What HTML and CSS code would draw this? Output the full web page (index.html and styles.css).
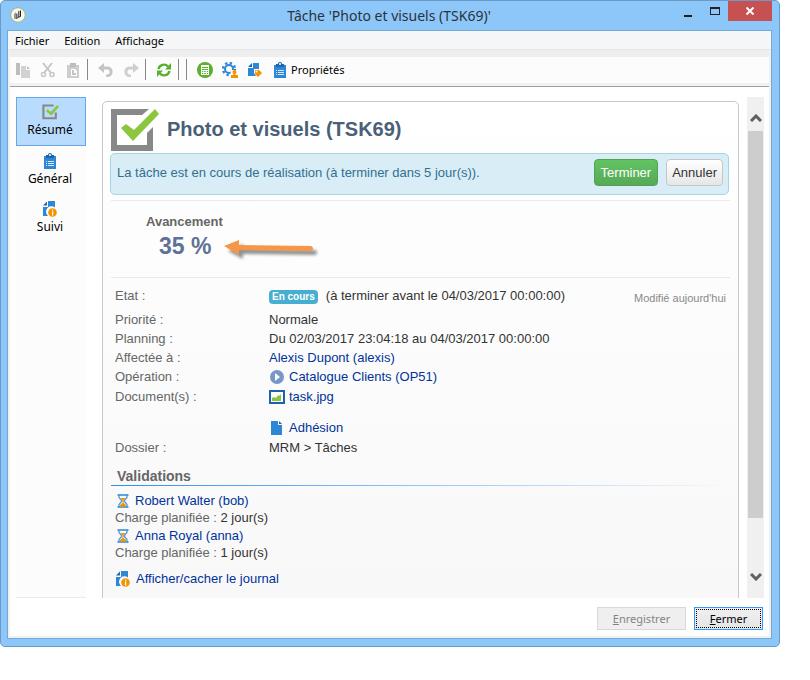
FILE: index.html
```
<!DOCTYPE html>
<html lang="fr">
<head>
<meta charset="utf-8">
<title>Tâche 'Photo et visuels (TSK69)'</title>
<link rel="stylesheet" href="styles.css">
</head>
<body>
<svg class="defs" aria-hidden="true">
  <symbol id="i-clipboard" viewBox="0 0 16 16"><path fill="#2f86d4" d="M2 3h12v13H2z"/><path fill="#1c66ae" d="M4 2h2a2 2 0 0 1 4 0h2v3H4z"/><circle cx="8" cy="2" r="1" fill="#fff"/><path stroke="#d5e8fa" d="M4 8.500h1M6 8.500h6M4 10.500h1M6 10.500h6M4 12.500h1M6 12.500h6"/></symbol>
  <symbol id="i-docinfo" viewBox="0 0 16 16"><path fill="#2f86d4" d="M6 0h7v6.500a5 5 0 0 0-7 8.500H1V6h5z"/><path fill="#1c66ae" d="M1 4.500 5 .5v4z"/><circle cx="10.500" cy="11.500" r="4.300" fill="#f29400"/><path fill="#fff" d="M10 8.500h1.200v1.300H10zM10 10.500h1.200v4H10z"/></symbol>
  <symbol id="i-hourglass" viewBox="0 0 12 14"><path fill="none" stroke="#4b95dc" stroke-width="1.200" d="M2 1v2.500L5 7 2 10.500V13M10 1v2.500L7 7l3 3.500V13"/><path stroke="#2f86d4" stroke-width="1.600" d="M.5 1h11M.5 13h11"/><path fill="#f29400" d="M3.500 4h5L6 6.800zM6 8.500l3 2.500v1.500H3V11zM5.500 6h1v3h-1z"/></symbol>
</svg>
<main class="window">
  <header class="titlebar">
    <svg class="app-icon" viewBox="0 0 16 16"><circle cx="8" cy="8" r="7.300" fill="#f7f7f2" stroke="#9db96a"/><path fill="#999" d="M4 7l2-2v7H4z"/><path fill="#666" d="M8 4h1.500v6H8zM6 6.500h1.500V12H6z"/><path stroke="#222" fill="none" d="M10.500 3.500v6l-3 1"/></svg>
    <h1>Tâche 'Photo et visuels (TSK69)'</h1>
    <div class="win-controls">
      <button aria-label="Réduire"><svg width="10" height="12"><path fill="#1e1e1e" d="M1 10h8v2H1z"/></svg></button>
      <button aria-label="Agrandir"><svg width="10" height="8"><path fill="#222" fill-rule="evenodd" d="M0 0h10v8H0zM1 2v5h8V2z"/></svg></button>
      <button class="close" aria-label="Fermer la fenêtre"><svg width="8" height="8"><path stroke="#fff" stroke-width="2" d="M.5.5l7 7M7.500.5l-7 7"/></svg></button>
    </div>
  </header>
  <div class="client">
    <nav class="menubar"><button>Fichier</button><button>Edition</button><button>Affichage</button></nav>
    <div class="toolbar">
      <button aria-label="Copier"><svg width="16" height="16"><path fill="#bdbdbd" d="M1 1h4v12H1z"/><path fill="#d2d2d2" d="M6 4h5v4h4v8H6z"/><path fill="#bdbdbd" d="M12 4l3 3h-3z"/></svg></button>
      <button aria-label="Couper"><svg width="16" height="16"><g fill="none" stroke="#c6c6c6" stroke-width="2"><path d="M3 1l8 10M12 1L4 11"/><circle cx="3.500" cy="12.500" r="2" stroke-width="1.500"/><circle cx="12" cy="12.500" r="2" stroke-width="1.500"/></g></svg></button>
      <button aria-label="Coller"><svg width="16" height="16"><path fill="#cdcdcd" d="M2 3h12v13H2z"/><path fill="#bdbdbd" d="M5 1h6v4H5z"/><path fill="#fff" d="M6 7h4l2 2v5H6z"/><path fill="#c4c4c4" d="M7 8h2v3h2v2H7z"/></svg></button>
      <i class="sep"></i>
      <button aria-label="Annuler la saisie"><svg width="16" height="16"><path fill="#c4c4c4" d="M0 6l6-5v3.500h4a5.300 5.300 0 0 1 0 10.500H8v-2.500h2a2.700 2.700 0 0 0 0-5H6V11z"/></svg></button>
      <button aria-label="Rétablir"><svg width="16" height="16"><path fill="#cfcfcf" d="M16 6l-6-5v3.500H6A5.300 5.300 0 0 0 6 15h2v-2.500H6a2.700 2.700 0 0 1 0-5h4V11z"/></svg></button>
      <i class="sep"></i>
      <button aria-label="Actualiser"><svg width="16" height="16"><g fill="none" stroke="#56b02c" stroke-width="2.400"><path d="M2.500 7A5.500 5.500 0 0 1 12 4.500M13.500 9A5.500 5.500 0 0 1 4 11.500"/></g><path fill="#56b02c" d="M15 1v6.500H9zM1 15V8.500h6z"/></svg></button>
      <i class="sep"></i><i class="sep second"></i>
      <button aria-label="Coûts"><svg width="16" height="16"><circle cx="8" cy="8" r="8" fill="#5bb030"/><path fill="#fff" d="M4 3h8v10H4z"/><path stroke="#5bb030" d="M5 5.500h6M5 7.500h6M5 9.500h6M5 11.500h6"/><path stroke="#fff" d="M6.700 8v4M9.300 8v4"/></svg></button>
      <button aria-label="Ressources"><svg width="16" height="16"><circle cx="7" cy="7" r="4" fill="none" stroke="#2f86d4" stroke-width="2"/><circle cx="7" cy="7" r="6" fill="none" stroke="#2f86d4" stroke-width="2.400" stroke-dasharray="2.350 2.360"/><path fill="#fcfcfc" d="M9 8h7v8H8z"/><circle cx="12.500" cy="10" r="2" fill="#f29400"/><path fill="#f29400" d="M11.500 11h2v2H16v3H9v-3h2.500z"/></svg></button>
      <button aria-label="Étiquettes"><svg width="16" height="16"><path fill="#2f86d4" d="M6 1h6v6H7v4l2 3H1V6h5z"/><path fill="#1c66ae" d="M1 5l4-4v4z"/><path fill="#f29400" d="M8 8h4l3 3-4 4-3-3z"/><circle cx="9.500" cy="9.500" r="1" fill="#fff"/></svg></button>
      <button class="props"><svg width="16" height="16"><use href="#i-clipboard"/></svg>Propriétés</button>
    </div>
    <div class="workspace">
      <nav class="sidebar">
        <button class="active"><svg width="17" height="16" viewBox="0 0 48 45"><path fill="none" stroke="#888" stroke-width="6" d="M33 4H4v36h35V24"/><path fill="#8cc63e" d="M11 20l5-5 9 7L43 3l5 5-22 25z"/></svg>Résumé</button>
        <button><svg width="16" height="16"><use href="#i-clipboard"/></svg>Général</button>
        <button><svg width="16" height="16"><use href="#i-docinfo"/></svg>Suivi</button>
      </nav>
      <div class="viewport">
        <article class="panel">
          <div class="heading">
            <svg width="48" height="42" viewBox="0 0 48 42"><path fill="#888" fill-rule="evenodd" d="M0 0h42v42H0zM6 6v30h30V6z"/><path fill="#fff" d="M31 6 38 0h10v17L36 24V6z"/><path fill="#888" d="M36 24l6-6v7h-6z"/><path fill="#8cc63e" d="M10 19l5-4 8 6L44 0l4 5-26 27z"/></svg>
            <h2>Photo et visuels (TSK69)</h2>
          </div>
          <div class="alert"><p>La tâche est en cours de réalisation (à terminer dans 5 jour(s)).</p><button class="btn success">Terminer</button><button class="btn">Annuler</button></div>
          <section class="progress">
            <h3>Avancement</h3>
            <strong>35 %</strong>
            <svg class="pointer" width="98" height="26"><defs><filter id="soft" x="-20%" y="-50%" width="140%" height="200%"><feGaussianBlur stdDeviation="1.500"/></filter></defs><path fill="#666" opacity=".7" filter="url(#soft)" transform="translate(4 4)" d="M0 10 15 3v4l72 2q2 0 2 2.500t-3 2.500l-71-1v5z"/><path fill="#f79646" d="M0 9 15 3v5l72 1q2 0 2 2.500t-3 2.500l-71-1v5z"/></svg>
          </section>
          <section class="details">
            <dl>
              <dt class="state">Etat :</dt><dd class="state"><span class="badge">En cours</span>(à terminer avant le 04/03/2017 00:00:00)</dd>
              <dt>Priorité :</dt><dd>Normale</dd>
              <dt>Planning :</dt><dd>Du 02/03/2017 23:04:18 au 04/03/2017 00:00:00</dd>
              <dt>Affectée à :</dt><dd><a href="#">Alexis Dupont (alexis)</a></dd>
              <dt>Opération :</dt><dd><a href="#"><svg width="16" height="16"><circle cx="8" cy="8" r="7" fill="#7896c8"/><path fill="#fff" d="M6 4l5 4-5 4z"/></svg>Catalogue Clients (OP51)</a></dd>
              <dt class="docs">Document(s) :</dt><dd class="docs"><a href="#"><svg width="16" height="14"><path fill="#1d63ab" d="M0 0h16v14H0z"/><path fill="#fff" d="M2 2h12v10H2z"/><path fill="#8cc63e" d="M3 8l2-1 2 1 2-3 1 1 2-2v7H3z"/></svg>task.jpg</a><a href="#"><svg width="16" height="14"><path fill="#2f86d4" d="M2 0h7v4h4v10H2z"/><path fill="#1c66ae" d="M10 0l3 3h-3z"/></svg>Adhésion</a></dd>
              <dt>Dossier :</dt><dd>MRM &gt; Tâches</dd>
            </dl>
            <p class="modified">Modifié aujourd'hui</p>
          </section>
          <h3 class="section-title">Validations</h3>
          <ul class="approvals">
            <li><a href="#"><svg width="12" height="14"><use href="#i-hourglass"/></svg>Robert Walter (bob)</a><p>Charge planifiée : <span>2 jour(s)</span></p></li>
            <li><a href="#"><svg width="12" height="14"><use href="#i-hourglass"/></svg>Anna Royal (anna)</a><p>Charge planifiée : <span>1 jour(s)</span></p></li>
          </ul>
          <a href="#" class="journal"><svg width="16" height="16"><use href="#i-docinfo"/></svg>Afficher/cacher le journal</a>
          <p class="log">A</p>
        </article>
      </div>
      <div class="scrollbar">
        <button aria-label="Défiler vers le haut"><svg width="12" height="8"><path fill="none" stroke="#606060" stroke-width="3" d="M1 7l5-5 5 5"/></svg></button>
        <div class="track"><div class="thumb"></div></div>
        <button aria-label="Défiler vers le bas"><svg width="12" height="8"><path fill="none" stroke="#606060" stroke-width="3" d="M1 1l5 5 5-5"/></svg></button>
      </div>
    </div>
    <footer class="actions">
      <button disabled><u>E</u>nregistrer</button>
      <button class="default"><span><u>F</u>ermer</span></button>
    </footer>
  </div>
</main>
</body>
</html>
```
FILE: styles.css
```
* { box-sizing: border-box; }
body {
  margin: 0;
  padding: 0 30px 33px 0;
  height: 100vh;
  background: #fff;
  color: #000;
  font: 12px/16px "Noto Sans", "Open Sans", sans-serif;
}
h1, h2, h3, p, dl, dd, ul { margin: 0; padding: 0; }
ul { list-style: none; }
button { font: inherit; color: inherit; border: 0; padding: 0; background: none; }
a { color: #003399; text-decoration: none; }
svg { flex: none; display: block; }
.defs { position: absolute; width: 0; height: 0; }

.window {
  height: 100%;
  display: flex;
  flex-direction: column;
  padding: 0 7px 7px 6px;
  border: 1px solid #6b9ac6;
  border-radius: 5px;
  background: #8dc7fa;
}
.titlebar { flex: none; display: flex; height: 29px; }
.app-icon { width: 16px; height: 16px; margin: 6px 0 0 3px; }
.titlebar h1 { flex: 1; padding-left: 78px; text-align: center; font-size: 14px; line-height: 30px; font-weight: 400; color: #2b3238; }
.win-controls { display: flex; height: 20px; }
.win-controls button { width: 27px; display: flex; align-items: center; justify-content: center; }
.win-controls .close { width: 44px; background: #c75050; }

.client {
  flex: 1;
  min-height: 0;
  display: flex;
  flex-direction: column;
  border: 1px solid #76a8d4;
  background: #fff;
  box-shadow: inset 0 0 0 2px #f0f0f0;
}
.menubar { flex: none; display: flex; gap: 15px; height: 19px; padding: 0 7px; background: #f5f6f7; border-bottom: 1px solid #e6e6e6; font-size: 11px; line-height: 20px; }
.toolbar {
  flex: none;
  display: flex;
  align-items: center;
  gap: 9px;
  height: 37px;
  margin: 0 2px;
  padding: 0 5px 4px;
  background: #fcfcfc;
  border-top: 7px solid #eee;
  border-bottom: 1px solid #a0a0a0;
  box-shadow: inset 0 -3px #f0f1f5;
  font-size: 11px;
}
.sep { width: 1px; height: 21px; margin: 0 -3px; background: #888; }
.sep + button { margin-left: 4px; }
.sep.second { margin-left: 1px; }
.props { display: flex; align-items: center; gap: 3px; }

.workspace { flex: 1; min-height: 0; display: flex; padding: 10px 7px 0 8px; }
.sidebar { flex: none; width: 70px; background: #fcfcfc; border-bottom: 1px solid #e3eef9; }
.sidebar button { width: 100%; height: 48px; display: flex; flex-direction: column; align-items: center; gap: 2px; padding: 6px 2px 0 0; border: 1px solid transparent; font-size: 12px; }
.sidebar .active { height: 49px; background: #b9dbfd; border-color: #66a7e8; }
.viewport { flex: 1; min-width: 0; overflow: hidden; padding: 4px 8px 0 16px; }
.scrollbar { flex: none; width: 17px; display: flex; flex-direction: column; background: #f0f0f0; }
.scrollbar button { height: 42px; display: flex; align-items: center; justify-content: center; }
.scrollbar button:first-child { height: 34px; padding-top: 8px; }
.track { flex: 1; padding: 0 1px; }
.thumb { height: 91%; background: #cdcdcd; }

.panel {
  height: 600px;
  padding: 7px 8px;
  border: 1px solid #c8c8c8;
  border-radius: 5px;
  background: linear-gradient(#fff, #f8f8f8 500px);
  color: #333;
  font: 13px/19px "Liberation Sans", Arial, sans-serif;
}
.heading { display: flex; align-items: center; gap: 8px; }
.heading h2 { padding-bottom: 2px; font-size: 20px; line-height: 24px; color: #4a5f78; }
.alert { display: flex; align-items: center; gap: 8px; height: 42px; margin: 2px 1px 5px -1px; padding: 0 5px 4px 6px; background: #d9edf7; border: 1px solid #a5d6df; border-radius: 5px; color: #31708f; }
.alert p { flex: 1; }
.btn { height: 27px; padding: 0 5px; border: 1px solid #c6c6c6; border-radius: 4px; background: linear-gradient(#fff, #e6e6e6); color: #333; }
.success { padding: 0 6px; border-color: #51a351; background: linear-gradient(#62c462, #57a957); color: #fff; }
.progress { position: relative; height: 77px; padding: 11px 35px; border-top: 1px solid #eaeaea; }
.progress h3 { font-size: 13px; color: #666; }
.progress strong { display: block; padding: 3px 13px; font-size: 23px; line-height: 24px; color: #5f7195; }
.pointer { position: absolute; left: 113px; top: 36px; }
.details { display: flex; align-items: flex-start; padding: 8px 4px 0 3px; border-top: 1px solid #eaeaea; }
.details dl { flex: 1; display: grid; grid-template-columns: 155px 1fr; }
dt { padding-left: 1px; color: #666; }
dd a, .approvals a, .journal { display: flex; align-items: center; gap: 4px; }
.state { min-height: 24px; display: flex; align-items: flex-start; gap: 8px; }
.docs a { height: 21px; }
.docs a + a { margin-top: 10px; }
.docs { line-height: 21px; }
.badge { margin-top: 4px; padding: 0 3px; border-radius: 4px; background: #46afcf; color: #fff; font-size: 10px; line-height: 14px; font-weight: 700; }
.modified { padding-top: 3px; font-size: 11px; color: #888; }
.section-title { height: 29px; padding: 10px 6px 0; font-size: 14px; color: #666; border-bottom: 1px solid; border-image: linear-gradient(90deg, #2e8ef0, transparent) 1; }
.approvals { padding: 6px 4px 0; }
.approvals li { height: 35px; }
.approvals a { gap: 6px; padding-left: 2px; line-height: 18px; }
.approvals p { line-height: 15px; color: #666; }
.approvals span { color: #333; }
.journal { gap: 5px; padding: 7px 4px 0; }
.log { padding: 5px 25px 0; }

.actions { flex: none; display: flex; justify-content: flex-end; gap: 8px; padding: 9px 8px 7px; height: 40px; }
.actions button { width: 89px; height: 23px; border: 1px solid #d9d9d9; background: #efefef; color: #838383; font-size: 11px; }
.actions .default { width: 69px; padding: 1px; border-color: #3399ff; background: linear-gradient(#f0f0f0, #e5e5e5); color: #000; }
.default span { display: block; height: 100%; border: 1px dotted #000; line-height: 17px; }
```
